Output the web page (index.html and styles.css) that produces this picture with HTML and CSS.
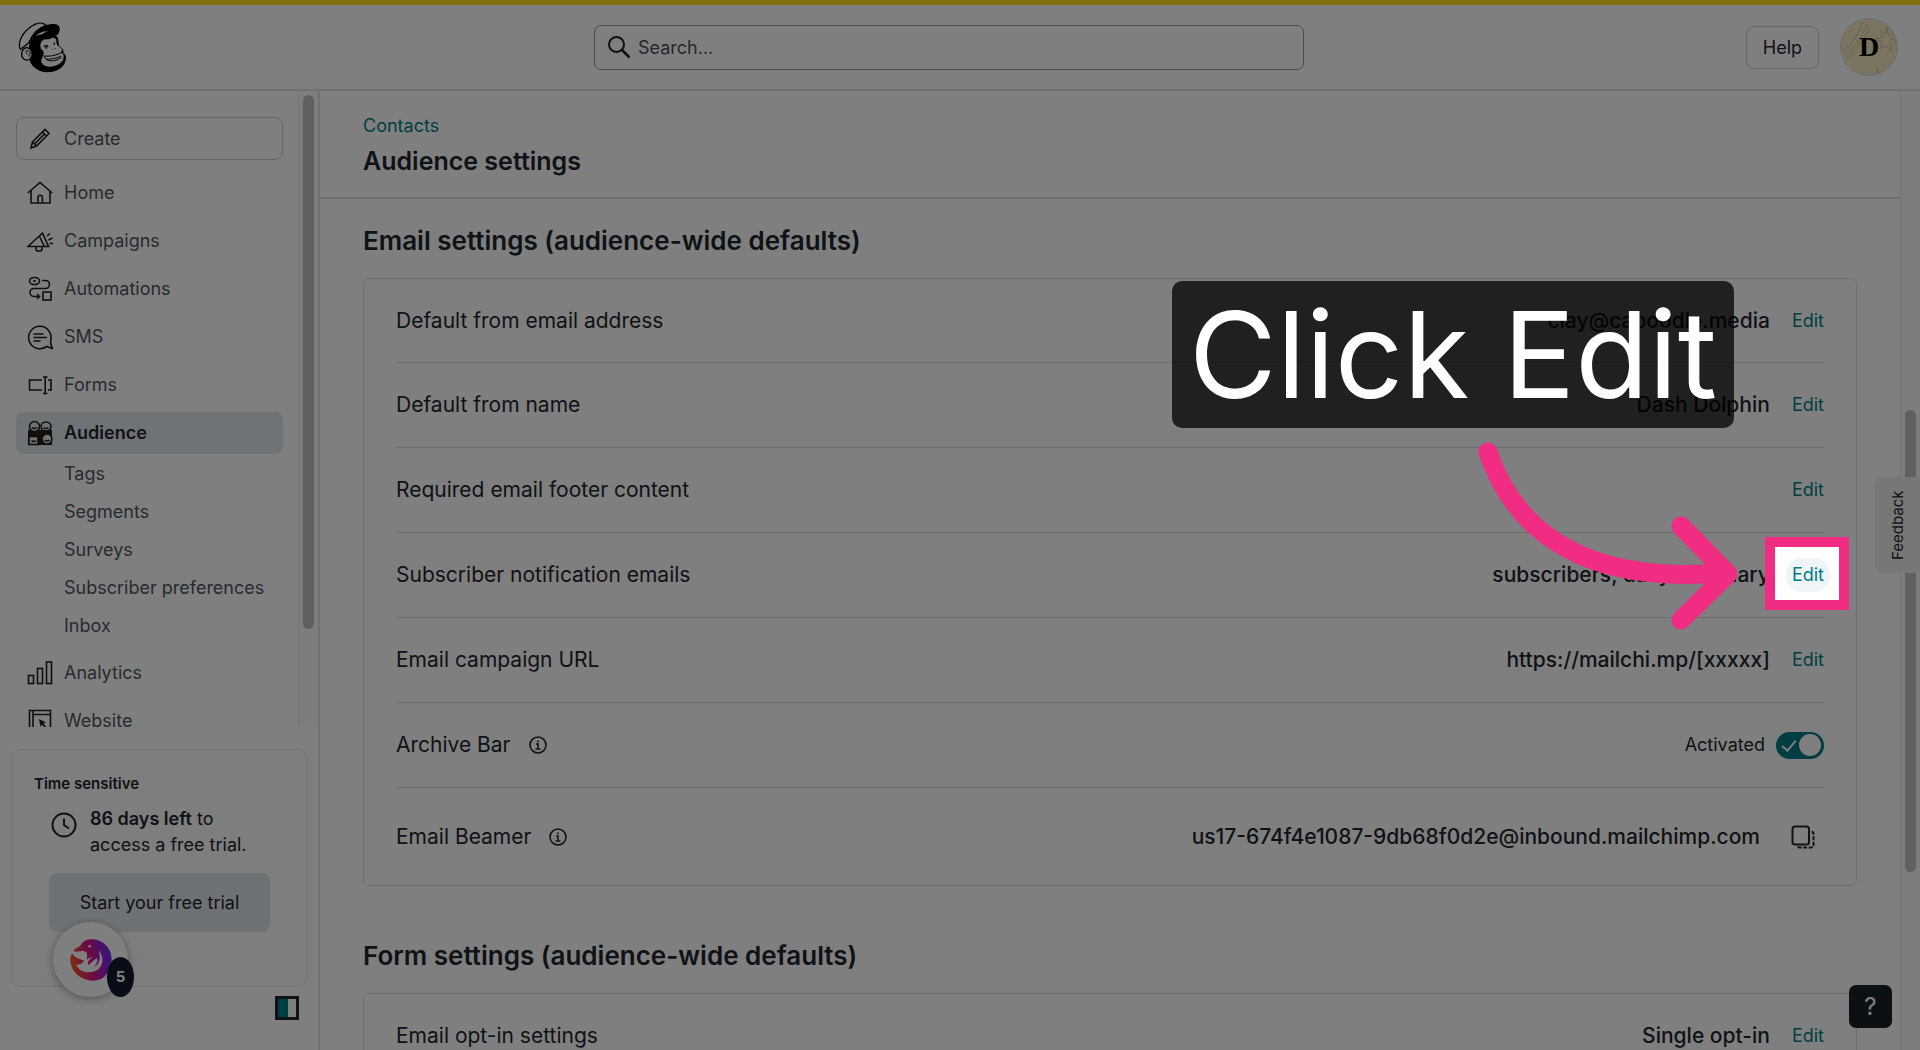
FILE: index.html
```html
<!DOCTYPE html>
<html lang="en">
<head>
  <meta charset="UTF-8">
  <title>Audience settings</title>
  <link rel="stylesheet" href="styles.css">
</head>
<body>
  <header class="topbar">
    <a class="logo" href="#" aria-label="Dashboard">
      <svg viewBox="54 64 149 155" width="49" height="51">
        <path d="M100 100C86 115 88 140 87 172C92 200 116 217 143 217C175 217 199 200 200 172C200 165 197 161 192 159C194 150 190 143 180 139C176 130 179 117 173 109C160 98 120 90 100 100Z" fill="#000"/>
        <path d="M127 120C134 112 146 118 152 114C161 108 171 111 172 122C170 131 176 137 182 140C190 144 191 151 185 156C195 161 196 170 191 181C183 194 165 201 147 201C130 199 120 188 125 176C131 168 133 158 129 151C118 143 119 130 127 120Z" fill="#fff" stroke="#000" stroke-width="2"/>
        <path d="M61 147C53 130 62 103 90 81C111 65 130 63 140 76C118 82 98 103 88 124C84 132 72 138 61 147Z" fill="#fff" stroke="#000" stroke-width="4"/>
        <path d="M88 130C92 96 125 70 162 70C180 69 184 82 179 94C175 106 166 108 160 103C143 98 126 104 112 116Z" fill="#000"/>
        <path d="M108 108C116 96 130 92 146 91C134 96 130 98 126 102C120 101 114 104 108 108Z" fill="#fff"/>
        <ellipse cx="81" cy="161" rx="16" ry="19" fill="#fff" stroke="#000" stroke-width="4"/>
        <path d="M76 156C81 148 92 152 91 160C90 164 86 163 88 169M78 158l5 3" fill="none" stroke="#000" stroke-width="3"/>
        <path d="M132 139c5-5 11-4 14 0M136 142l8 1M164 126v8M157 146h2M166 145h2" fill="none" stroke="#000" stroke-width="3.5"/>
        <path d="M134 167C155 170 172 164 189 156M134 168C138 185 165 188 186 171M139 177C155 178 170 175 184 168" fill="none" stroke="#000" stroke-width="3"/>
      </svg>
    </a>
    <form class="search">
      <svg viewBox="0 0 24 24" width="24" height="24"><circle cx="9.500" cy="9.500" r="7.500" fill="none" stroke="#241c15" stroke-width="2"/><path d="M15 15l7.500 7.500" stroke="#241c15" stroke-width="2.500"/></svg>
      <input type="search" placeholder="Search..." aria-label="Search">
    </form>
    <div class="topbar-actions">
      <button class="btn-help" type="button">Help</button>
      <button class="avatar" type="button">
        <svg viewBox="0 0 58 58" width="58" height="58"><g fill="none" stroke="#cdc29c" stroke-width="1"><path d="M22 3C18 14 12 24 2 32M26 5C22 17 14 28 3 37M29 9C24 20 16 30 5 41"/><path d="M46 8l1 8 7-3-4 7 7 3-8 2 2 8-6-6-6 3 2-7-6-3 7-2-3-6 6 3z"/><path d="M34 57l3-8v6"/></g></svg>
        <span>D</span>
      </button>
    </div>
  </header>

  <div class="layout">
    <aside class="sidebar">
      <div class="nav-scroll">
        <nav class="nav">
          <button class="btn-create" type="button">
            <svg class="ico" viewBox="0 0 26 26"><path d="M4 22l1.500-6L18 3.500l4 4L9.500 20zM5.500 16l4 4M15.500 6l4 4M8 17.500L18 7.500"/></svg>
            Create
          </button>
          <a class="nav-item" href="#">
            <svg class="ico" viewBox="0 0 26 26"><path d="M.8 13L13 2.500 25.200 13M4 10.500V23h19V10.500M11 23v-5.500a2.200 2.200 0 0 1 4.400 0V23"/></svg>
            Home
          </a>
          <a class="nav-item" href="#">
            <svg class="ico" viewBox="0 0 26 26"><path d="M1 18.500L15.500 5l6 13.500zM12.500 8.500l5 10M9 19v2.500q0 1.500 3 1.500t3-1.500V19M20 8l3-2.500M21.500 12l4-2M22.500 15.500h3.500"/></svg>
            Campaigns
          </a>
          <a class="nav-item" href="#">
            <svg class="ico" viewBox="0 0 26 26"><ellipse cx="7.500" cy="5" rx="5" ry="3.500"/><path d="M6 5h3M15 4.500h3.500a4 4 0 0 1 0 8H7a4 4 0 0 0 0 8h4.500M10 18l2.500 2.500L10 23"/><rect x="16" y="16" width="8" height="8"/></svg>
            Automations
          </a>
          <a class="nav-item" href="#">
            <svg class="ico" viewBox="0 0 26 26"><path d="M19.500 22.500a11.200 11.200 0 1 1 4-5.500q0 4 2 7.500zM6.500 10h10M6.500 13.500h13.500M6.500 17h7"/></svg>
            SMS
          </a>
          <a class="nav-item" href="#">
            <svg class="ico" viewBox="0 0 26 26"><path d="M15 18H2.500V8H15M21 8h3v10h-3M16 5h4.500M16 21.500h4.500M18.200 5v16.500"/></svg>
            Forms
          </a>
          <a class="nav-item active" href="#">
            <svg class="ico" viewBox="0 0 26 26"><rect x="1" y="10" width="24" height="15" fill="#241c15" stroke="none"/><g fill="#dbe4e9"><circle cx="7.500" cy="6.500" r="5"/><ellipse cx="19" cy="6.500" rx="5" ry="4.500"/><rect x="2" y="16.500" width="9" height="8"/><circle cx="20" cy="19" r="5"/></g><path d="M5 7.500q2.500 2 5 0M16.500 7.500q2.500 2 5 0M4.500 20.500q2 2 4.500 0M17.500 20q2.500 2 5 0"/></svg>
            Audience
          </a>
          <div class="subnav">
            <a href="#">Tags</a>
            <a href="#">Segments</a>
            <a href="#">Surveys</a>
            <a href="#">Subscriber preferences</a>
            <a href="#">Inbox</a>
          </div>
          <a class="nav-item" href="#">
            <svg class="ico" viewBox="0 0 26 26"><rect x="1.500" y="15.500" width="5" height="8"/><rect x="10.500" y="8.500" width="5" height="15"/><rect x="19.500" y="2" width="5" height="21.500"/></svg>
            Analytics
          </a>
          <a class="nav-item" href="#">
            <svg class="ico" viewBox="0 0 26 26"><path d="M2.500 24V2.500h21V24M6 2.500V24M6 6.500h17.500"/><path d="M12 11l7 3.500-2.500 1 2.500 3-1.500 1-2.500-3-1.500 2.500z" fill="#241c15" stroke="none"/></svg>
            Website
          </a>
        </nav>
        <div class="track"><div class="thumb side-thumb"></div></div>
      </div>

      <section class="promo">
        <h2>Time sensitive</h2>
        <div class="promo-text">
          <svg viewBox="0 0 26 26" width="26" height="26" fill="none" stroke="#21262a" stroke-width="2"><circle cx="13" cy="13" r="11.500"/><path d="M13 6.500V13l5 3.500"/></svg>
          <p><b>86 days left</b> to<br>access a free trial.</p>
        </div>
        <button class="btn-trial" type="button">Start your free trial</button>
        <button class="assistant" type="button" aria-label="Assistant">
          <svg viewBox="209 627 126 126" width="42" height="42">
            <defs>
              <linearGradient id="fin" x1="0" y1=".6" x2="1" y2=".4">
                <stop offset="0" stop-color="#ff5a1f"/>
                <stop offset=".5" stop-color="#d4148c"/>
                <stop offset="1" stop-color="#6a2cff"/>
              </linearGradient>
            </defs>
            <path d="M223 665C214 656 236 654 242 644C250 626 285 622 306 637C345 662 341 720 307 744C270 765 218 742 211 700C209 688 210 677 216 670C219 680 228 684 252 692C243 702 238 703 228 704C236 725 262 731 283 724C309 714 314 683 295 660C303 685 296 705 280 712C290 701 292 693 290 684C281 690 272 698 264 706C261 696 266 686 276 683C270 681 264 684 260 689C258 674 266 667 248 663Z" fill="url(#fin)"/>
            <circle cx="268" cy="649" r="4" fill="#fff"/>
          </svg>
          <span class="badge">5</span>
        </button>
      </section>
      <button class="btn-collapse" type="button" aria-label="Collapse navigation"></button>
    </aside>

    <main class="content">
      <div class="page-head">
        <a href="#">Contacts</a>
        <h1>Audience settings</h1>
      </div>
      <div class="page-body">
        <h2>Email settings (audience-wide defaults)</h2>
        <div class="card">
          <div class="row">
            <span>Default from email address</span>
            <strong>clay@caboodle.media</strong>
            <a href="#">Edit</a>
          </div>
          <div class="row">
            <span>Default from name</span>
            <strong>Dash Dolphin</strong>
            <a href="#">Edit</a>
          </div>
          <div class="row">
            <span>Required email footer content</span>
            <a href="#">Edit</a>
          </div>
          <div class="row">
            <span>Subscriber notification emails</span>
            <strong>subscribers, daily summary</strong>
            <a class="hover" href="#">Edit</a>
          </div>
          <div class="row">
            <span>Email campaign URL</span>
            <strong>https://mailchi.mp/[xxxxx]</strong>
            <a href="#">Edit</a>
          </div>
          <div class="row">
            <span>Archive Bar</span>
            <svg class="info" viewBox="0 0 18 18"><circle cx="9" cy="9" r="8"/><path d="M7 8h2v5M6.500 13h5M9 4.500v1.800"/></svg>
            <label class="switch">Activated <input type="checkbox" checked></label>
          </div>
          <div class="row row-tall">
            <span>Email Beamer</span>
            <svg class="info" viewBox="0 0 18 18"><circle cx="9" cy="9" r="8"/><path d="M7 8h2v5M6.500 13h5M9 4.500v1.800"/></svg>
            <strong>us17-674f4e1087-9db68f0d2e@inbound.mailchimp.com</strong>
            <button class="btn-copy" type="button" aria-label="Copy">
              <svg viewBox="0 0 24 24" width="24" height="24" fill="none" stroke="#21262a" stroke-width="2"><rect x="1.500" y="1.500" width="16.500" height="18" rx="2.500"/><path d="M20.500 6.500q2 .5 2 2.500v11q0 2.500-2.500 2.500H9q-2 0-2.500-2" stroke-dasharray="4 1.500"/></svg>
            </button>
          </div>
        </div>

        <h2>Form settings (audience-wide defaults)</h2>
        <div class="card">
          <div class="row">
            <span>Email opt-in settings</span>
            <strong>Single opt-in</strong>
            <a href="#">Edit</a>
          </div>
        </div>
      </div>
    </main>
    <div class="track"><div class="thumb main-thumb"></div></div>
  </div>

  <button class="feedback" type="button">Feedback</button>
  <button class="help-fab" type="button" aria-label="Support">?</button>

  <!-- walkthrough step -->
  <div class="tour">
    <div class="spotlight"></div>
    <div class="callout">Click Edit</div>
    <svg class="arrow" viewBox="0 0 270 200" width="270" height="200"><path d="M18 22C48 110 125 153 252 143M211 96L258 144L211 190"/></svg>
  </div>
</body>
</html>
```
FILE: styles.css
```css
* { box-sizing: border-box; }
html, body { height: 100%; margin: 0; }
body { display: flex; flex-direction: column; position: relative; overflow: hidden; background: #fff; color: #21262a; font: 18px/26px Inter, "Liberation Sans", sans-serif; }
button, input { font: inherit; color: inherit; }
button { padding: 0; border: 0; background: none; cursor: pointer; }
a { color: #007c89; text-decoration: none; }
h1, h2, p { margin: 0; }

.topbar { flex: none; display: grid; grid-template-columns: 1fr minmax(0, 710px) 1fr; align-items: center; height: 91px; padding-right: 22px; border-top: 5px solid #ffe01b; border-bottom: 2px solid #dbe4ea; }
.logo { display: flex; margin-left: 18px; }
.search { display: flex; align-items: center; gap: 7px; height: 45px; padding: 0 12px; border: 1px solid #8f9aa2; border-radius: 7px; }
.search input { flex: 1; min-width: 0; padding: 1px 0 0; border: 0; outline: 0; background: none; }
.search input::placeholder { color: #4a5055; opacity: 1; }
.topbar-actions { display: flex; justify-content: flex-end; align-items: center; gap: 21px; }
.btn-help { width: 73px; height: 43px; padding-top: 1px; border: 1px solid #c8ced2; border-radius: 8px; }
.avatar { position: relative; width: 58px; height: 58px; border: 1px solid #d6dde0; border-radius: 50%; background: #f5e9c3; overflow: hidden; }
.avatar svg { position: absolute; inset: 0; }
.avatar span { position: relative; color: #000; font: bold 28px/56px "Liberation Serif", serif; }

.layout { flex: 1; min-height: 0; display: flex; }
.track { flex: none; width: 20px; padding: 4px 4px 0; border-left: 1px solid #e8e8e8; background: #fafafa; }
.thumb { width: 11px; border-radius: 6px; background: #c1c1c1; }
.side-thumb { height: 534px; }
.main-thumb { height: 462px; margin-top: 315px; }

.sidebar { flex: none; width: 320px; display: flex; flex-direction: column; border-right: 2px solid #dbe4ea; }
.nav-scroll { flex: 1; min-height: 0; display: flex; overflow: hidden; }
.nav { flex: 1; display: flex; flex-direction: column; padding: 26px 15px 0 16px; }
.btn-create, .nav-item { flex: none; display: flex; align-items: center; gap: 11px; height: 42px; margin-bottom: 6px; padding-left: 11px; border-radius: 8px; color: #4f565b; }
.btn-create { height: 43px; margin-bottom: 12px; padding-left: 10px; border: 1px solid #c3ced8; }
.nav-item.active { margin-bottom: 1px; background: #dfe7ec; color: #21262a; font-weight: 600; }
.ico { width: 26px; height: 26px; fill: none; stroke: #241c15; stroke-width: 1.6; }
.subnav { flex: none; display: flex; flex-direction: column; padding-left: 48px; margin-bottom: 7px; }
.subnav a { color: #4f565b; line-height: 38px; }

.promo { position: relative; flex: none; display: flex; flex-direction: column; height: 238px; margin: 22px 10px 0 11px; padding: 20px 37px 0; border: 1px solid #dbe4ea; border-radius: 10px; background: #fafcfb; }
.promo h2 { margin-left: -15px; font-size: 15px; font-weight: 600; line-height: 28px; }
.promo-text { display: flex; gap: 13px; margin-top: 8px; padding-left: 2px; }
.promo-text svg { flex: none; margin-top: 6px; }
.promo-text p { white-space: nowrap; }
.promo-text b { font-weight: 600; }
.btn-trial { height: 59px; margin-top: 15px; border-radius: 8px; background: #dfe5ea; }
.assistant { position: absolute; left: 41px; bottom: -11px; width: 75px; height: 75px; display: flex; justify-content: center; align-items: center; border-radius: 50%; background: #fff; box-shadow: 0 2px 10px rgba(0,0,0,0.35); }
.badge { position: absolute; right: -6px; bottom: 0; width: 27px; height: 40px; border-radius: 50%; background: #121b2e; color: #fff; font-size: 15px; font-weight: 700; line-height: 40px; }
.btn-collapse { flex: none; align-self: flex-end; width: 24px; height: 24px; margin: 9px 19px 30px; border: 3px solid #21262a; background: linear-gradient(90deg, #007c89 10px, #fff 10px); }

.content { flex: 1; min-width: 0; overflow: hidden; }
.page-head { display: flex; flex-direction: column; height: 108px; padding: 22px 43px 0; border-bottom: 2px solid #dbe4ea; }
.page-head h1 { font-size: 25px; font-weight: 600; line-height: 32px; margin-top: 6px; }
.page-body { padding: 26px 43px 0; }
.page-body h2 { font-size: 26px; font-weight: 600; line-height: 32px; margin-bottom: 21px; }
.card { margin-bottom: 54px; padding: 0 32px; border: 1px solid #d5dfe8; border-radius: 6px; }
.row { display: flex; align-items: center; height: 85px; border-bottom: 1px solid #d5dfe8; font-size: 21px; }
.row:first-child { height: 84px; }
.row:last-child { border-bottom: 0; }
.row-tall { height: 97px; }
.row strong { margin-left: auto; font-weight: 500; }
.row a { margin-left: 22px; font-size: 18px; }
.row span + a { margin-left: auto; }
.row a.hover { margin: 0 -6px 0 16px; padding: 4px 6px; border-radius: 16px; background: #eef4f7; }
.info { width: 18px; height: 18px; margin-left: 18px; fill: none; stroke: #21262a; stroke-width: 1.6; }
.switch { display: flex; align-items: center; gap: 11px; margin-left: auto; font-size: 18px; }
.switch input { appearance: none; display: flex; align-items: center; justify-content: space-between; width: 48px; height: 27px; margin: 0; padding: 0 3px 0 9px; border-radius: 14px; background: #007c89; }
.switch input::before { content: ""; width: 6px; height: 12px; margin-bottom: 3px; border: solid #fff; border-width: 0 2px 2px 0; transform: rotate(40deg); }
.switch input::after { content: ""; width: 22px; height: 22px; border-radius: 50%; background: #fff; }
.btn-copy { display: flex; margin: 0 9px 0 31px; }

.feedback { position: absolute; right: 0; top: 477px; width: 45px; height: 96px; border-radius: 0 8px 8px 0; background: #f0efeb; font-size: 15px; writing-mode: vertical-rl; transform: rotate(180deg); }
.help-fab { position: absolute; right: 28px; bottom: 22px; width: 43px; height: 43px; border-radius: 7px; background: #1b2024; color: #fff; font-size: 24px; }

.tour { position: absolute; inset: 0; z-index: 10; overflow: hidden; }
.spotlight { position: absolute; right: 71px; top: 537px; width: 84px; height: 73px; border: 10px solid #f02d82; box-shadow: 0 0 0 3000px rgba(0,0,0,0.5); }
.callout { position: absolute; right: 186px; top: 281px; width: 562px; height: 147px; border-radius: 10px; background: rgba(0,0,0,0.75); color: #fff; font-size: 120px; line-height: 147px; text-align: center; white-space: nowrap; }
.arrow { position: absolute; right: 180px; top: 430px; fill: none; stroke: #f02d82; stroke-width: 19; stroke-linecap: round; stroke-linejoin: round; }
```
